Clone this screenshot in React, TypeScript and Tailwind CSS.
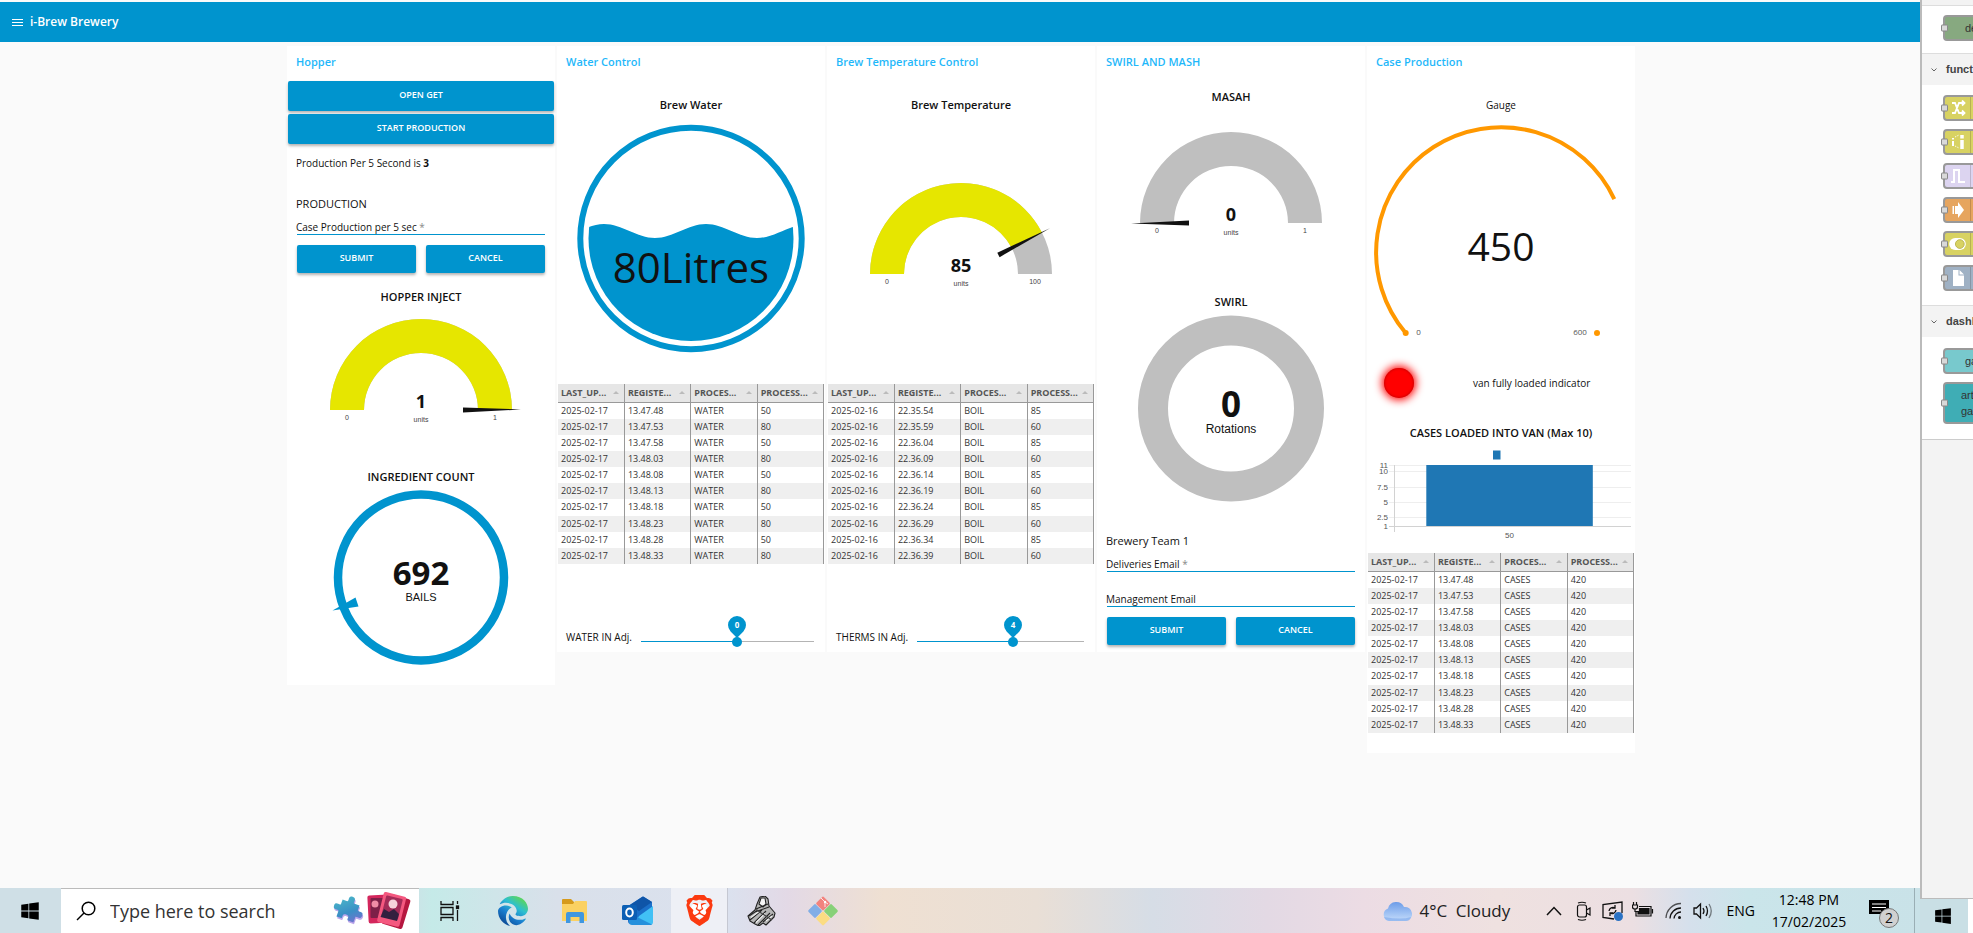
import { useState } from "react";
import type { ReactNode } from "react";
import { FaBrave, FaEdge, FaWindows } from "react-icons/fa6";

const SANS = "font-['Open_Sans','Noto_Sans',sans-serif]";

function polar(cx: number, cy: number, r: number, deg: number) {
  const a = (deg * Math.PI) / 180;
  return `${(cx + r * Math.cos(a)).toFixed(2)} ${(cy - r * Math.sin(a)).toFixed(2)}`;
}

function Card({ title, className = "", children }: { title: string; className?: string; children: ReactNode }) {
  return (
    <section className={`flex w-[268px] shrink-0 flex-col bg-white ${className}`}>
      <h2 className="mb-[3px] flex h-8 items-center px-[9px] text-[11px] font-semibold text-[#1fb8fa]">{title}</h2>
      {children}
    </section>
  );
}

function WideButton({ children }: { children: ReactNode }) {
  return (
    <button className="mx-px mb-[3px] h-[30px] rounded-xs bg-[#0094ce] pb-[2px] text-[9px] font-semibold text-white shadow-[0_2px_3px_rgba(0,0,0,0.3)]">
      {children}
    </button>
  );
}

function Field({ id, label, required }: { id: string; label: string; required?: boolean }) {
  return (
    <div className="relative mx-[10px] flex h-[15px]">
      <label htmlFor={id} className="pointer-events-none absolute top-0 -left-px text-[10px] leading-[14px]">
        {label}
        {required && <span className="text-[#888]"> *</span>}
      </label>
      <input id={id} className="w-full border-b border-[#0094ce] bg-transparent text-[10px] outline-none" />
    </div>
  );
}

function FormButtons() {
  return (
    <div className="mx-[10px] mt-[10px] grid grid-cols-2 gap-[10px]">
      {["SUBMIT", "CANCEL"].map((t) => (
        <button
          key={t}
          className="h-7 rounded-xs bg-[#0094ce] pb-[2px] text-[9px] font-semibold text-white shadow-[0_2px_3px_rgba(0,0,0,0.3)]"
        >
          {t}
        </button>
      ))}
    </div>
  );
}

function Gauge({ value, max, base, height }: { value: number; max: number; base: number; height: number }) {
  const cx = 134;
  const angle = 180 - (180 * value) / max;
  const arc = (from: number, to: number) =>
    `M${polar(cx, base, 91, from)} A91 91 0 0 1 ${polar(cx, base, 91, to)} L${polar(cx, base, 57, to)} A57 57 0 0 0 ${polar(cx, base, 57, from)} Z`;
  return (
    <svg viewBox={`0 0 268 ${height}`} className="w-full">
      <path d={arc(180, 0)} fill="#bfbfbf" />
      {value > 0 && <path d={arc(180, angle)} fill="#e6e600" />}
      <polygon
        fill="#111"
        points={`${cx + 42},${base - 2.5} ${cx + 100},${base - 0.5} ${cx + 42},${base + 2.5}`}
        transform={`rotate(${-angle} ${cx} ${base})`}
      />
      <g textAnchor="middle">
        <text x={cx} y={base - 2} fontSize="18" fontWeight="700" fill="#111">
          {value}
        </text>
        <g className="font-['Liberation_Sans',sans-serif]" fontSize="7" fill="#444">
          <text x={cx} y={base + 12}>units</text>
          <text x={cx - 74} y={base + 10}>0</text>
          <text x={cx + 74} y={base + 10}>{max}</text>
        </g>
      </g>
    </svg>
  );
}

function GaugeTitle({ className = "", children }: { className?: string; children: ReactNode }) {
  return <h3 className={`flex items-center justify-center text-[11px] font-semibold text-[#111] ${className}`}>{children}</h3>;
}

const COLUMNS = ["LAST_UP...", "REGISTE...", "PROCES...", "PROCESS..."];

function DataTable({ date, times, process, values }: { date: string; times: string[]; process: string; values: string[] }) {
  return (
    <table className="mx-px h-[180px] w-[266px] table-fixed border-collapse text-[9px] leading-[12px] text-[#333]">
      <thead>
        <tr className="h-[18px] border-b border-[#999] bg-[#e6e6e6] text-[#555]">
          {COLUMNS.map((c) => (
            <th key={c} className="border-r border-[#999] p-0 pr-[5px] pl-[3px] text-left font-bold">
              <div className="flex items-center justify-between">
                {c}
                <span className="border-x-3 border-b-3 border-x-transparent border-b-[#bbb]" />
              </div>
            </th>
          ))}
        </tr>
      </thead>
      <tbody>
        {times.map((t, i) => (
          <tr key={t} className="bg-white even:bg-[#efefef]">
            {[date, t, process, values[i % values.length]].map((v, j) => (
              <td key={j} className="border-r border-[#999] p-0 pl-[3px]">
                {v}
              </td>
            ))}
          </tr>
        ))}
      </tbody>
    </table>
  );
}

const WATER_TIMES = ["13.47.48", "13.47.53", "13.47.58", "13.48.03", "13.48.08", "13.48.13", "13.48.18", "13.48.23", "13.48.28", "13.48.33"];
const BOIL_TIMES = ["22.35.54", "22.35.59", "22.36.04", "22.36.09", "22.36.14", "22.36.19", "22.36.24", "22.36.29", "22.36.34", "22.36.39"];

function Slider({ id, label, min, max, initial }: { id: string; label: string; min: number; max: number; initial: number }) {
  const [value, setValue] = useState(initial);
  const ratio = (value - min) / (max - min);
  const pos = `calc(${ratio * 100}% + ${5 - ratio * 10}px)`;
  return (
    <div className="mt-11 flex h-11 items-start pr-[11px] pl-[9px]">
      <label htmlFor={id} className="mt-5 mr-[9px] text-[10px] leading-[18px] whitespace-nowrap">
        {label}
      </label>
      <div className="relative h-11 flex-1">
        <div className="absolute inset-x-0 top-[33px] h-px bg-[#b4b4b4]" />
        <div className="absolute top-[33px] left-0 h-px bg-[#0094ce]" style={{ width: pos }} />
        <div className="absolute top-2 -translate-x-1/2" style={{ left: pos }}>
          <svg width="18" height="22" viewBox="0 0 18 22">
            <path d="M9 22 L2.6 15.4 A9 9 0 1 1 15.4 15.4 Z" fill="#0094ce" />
            <text x="9" y="12" textAnchor="middle" fontSize="8" fontWeight="700" fill="#fff">
              {value}
            </text>
          </svg>
        </div>
        <input
          id={id}
          type="range"
          min={min}
          max={max}
          value={value}
          onChange={(e) => setValue(Number(e.target.value))}
          className="absolute inset-x-0 top-7 m-0 h-[11px] w-full appearance-none bg-transparent outline-none [&::-webkit-slider-thumb]:h-[10px] [&::-webkit-slider-thumb]:w-[10px] [&::-webkit-slider-thumb]:appearance-none [&::-webkit-slider-thumb]:rounded-full [&::-webkit-slider-thumb]:bg-[#0094ce]"
        />
      </div>
    </div>
  );
}

function HopperCard() {
  return (
    <Card title="Hopper" className="pb-4">
      <WideButton>OPEN GET</WideButton>
      <WideButton>START PRODUCTION</WideButton>
      <p className="flex h-8 items-center px-[9px] text-[10px]">
        Production Per 5 Second is&nbsp;<b>3</b>
      </p>
      <h3 className="mt-[9px] flex h-8 items-center px-[9px] text-[11px] font-medium text-[#111]">PRODUCTION</h3>
      <Field id="case-production" label="Case Production per 5 sec" required />
      <FormButtons />
      <GaugeTitle className="mt-2 h-8">HOPPER INJECT</GaugeTitle>
      <Gauge value={1} max={1} base={97} height={120} />
      <GaugeTitle className="mt-8 h-6">INGREDIENT COUNT</GaugeTitle>
      <svg viewBox="0 0 268 180" className="w-full">
        <circle cx="134" cy="88.5" r="83" fill="none" stroke="#0094ce" strokeWidth="8.5" />
        <polygon points="45.5,121.5 68.5,108.5 71.5,117.5" fill="#0094ce" />
        <text x="134" y="95.5" textAnchor="middle" fontSize="33" fontWeight="700" fill="#111">692</text>
        <text x="134" y="112" textAnchor="middle" fontSize="11" fill="#111" className="font-['Liberation_Sans',sans-serif]">BAILS</text>
      </svg>
    </Card>
  );
}

function WaterCard() {
  return (
    <Card title="Water Control">
      <GaugeTitle className="mt-2 h-8">Brew Water</GaugeTitle>
      <svg viewBox="0 0 268 235" className="mb-7 w-full">
        <defs>
          <clipPath id="tank">
            <circle cx="134" cy="117.5" r="102.5" />
          </clipPath>
        </defs>
        <circle cx="134" cy="117.5" r="110.7" fill="none" stroke="#0094ce" strokeWidth="6" />
        <path
          clipPath="url(#tank)"
          fill="#0094ce"
          d="M-4 117 C14 117 29 103 47 103 S80 117 98 117 S131 103 149 103 S182 117 200 117 S233 103 251 103 V235 H-4 Z"
        />
        <text x="134" y="162" textAnchor="middle" fontSize="42" fill="#111">80Litres</text>
      </svg>
      <DataTable date="2025-02-17" times={WATER_TIMES} process="WATER" values={["50", "80"]} />
      <Slider id="water-adj" label="WATER IN Adj." min={-10} max={8} initial={0} />
    </Card>
  );
}

function TemperatureCard() {
  return (
    <Card title="Brew Temperature Control">
      <GaugeTitle className="mt-2 h-8">Brew Temperature</GaugeTitle>
      <div className="mb-7">
        <Gauge value={85} max={100} base={153} height={235} />
      </div>
      <DataTable date="2025-02-16" times={BOIL_TIMES} process="BOIL" values={["85", "60"]} />
      <Slider id="therms-adj" label="THERMS IN Adj." min={-25} max={25} initial={4} />
    </Card>
  );
}

function SwirlCard() {
  return (
    <Card title="SWIRL AND MASH" className="pb-[7px]">
      <GaugeTitle className="h-8">MASAH</GaugeTitle>
      <Gauge value={0} max={1} base={110} height={145} />
      <GaugeTitle className="mt-8 h-6">SWIRL</GaugeTitle>
      <svg viewBox="0 0 268 190" className="w-full">
        <circle cx="134" cy="94.5" r="78" fill="none" stroke="#bfbfbf" strokeWidth="30" />
        <text x="134" y="103" textAnchor="middle" fontSize="35" fontWeight="700" fill="#111">0</text>
        <text x="134" y="119" textAnchor="middle" fontSize="12" fill="#111" className="font-['Liberation_Sans',sans-serif]">Rotations</text>
      </svg>
      <h3 className="mt-[21px] flex h-8 items-center px-[9px] text-[11px] font-medium text-[#111]">Brewery Team 1</h3>
      <Field id="deliveries" label="Deliveries Email" required />
      <div className="h-5" />
      <Field id="management" label="Management Email" />
      <FormButtons />
    </Card>
  );
}

const TICKS: [string, number][] = [["11", 16], ["10", 22], ["7.5", 38], ["5", 53], ["2.5", 68], ["1", 77]];

function CaseCard() {
  return (
    <Card title="Case Production" className="pb-5">
      <h3 className="mt-2 flex h-8 items-center justify-center text-[10px]">Gauge</h3>
      <svg viewBox="0 0 268 240" className="w-full">
        <path d={`M38.7 212 A125 125 0 1 1 ${polar(134, 131, 125, 25)}`} fill="none" stroke="#ff9800" strokeWidth="4" />
        <circle cx="38.7" cy="212" r="3" fill="#ff9800" />
        <circle cx="230" cy="212" r="3" fill="#ff9800" />
        <text x="134" y="140" textAnchor="middle" fontSize="39" fill="#111">450</text>
        <g textAnchor="middle" fontSize="8" fill="#555">
          <text x="51.5" y="214">0</text>
          <text x="213" y="214">600</text>
        </g>
      </svg>
      <div className="flex h-11 items-center pl-[17px]">
        <span className="h-[30px] w-[30px] rounded-full bg-[#ff0000] shadow-[0_0_8px_2px_#ff0000,inset_0_0_3px_rgba(120,0,0,0.6)]" />
        <span className="ml-[59px] text-[10px]">van fully loaded indicator</span>
      </div>
      <GaugeTitle className="mt-3 h-8">CASES LOADED INTO VAN (Max 10)</GaugeTitle>
      <svg viewBox="0 0 268 96" className="mb-2 w-full font-['Liberation_Sans',sans-serif]">
        <rect x="126" y="1.5" width="7.5" height="9" fill="#1f77b4" />
        <g stroke="#eeeeee">
          {TICKS.map(([label, y]) => (
            <line key={label} x1="22" x2="264" y1={y + 0.5} y2={y + 0.5} />
          ))}
        </g>
        <path d="M27.5 16 V83 M22 77.5 H264" stroke="#d2d2d2" fill="none" />
        <rect x="59.3" y="16" width="166.5" height="61" fill="#1f77b4" />
        <g fontSize="8" fill="#555" textAnchor="end">
          {TICKS.map(([label, y]) => (
            <text key={label} x="21" y={y + 3}>
              {label}
            </text>
          ))}
        </g>
        <text x="142.5" y="89" fontSize="8" fill="#555" textAnchor="middle">50</text>
      </svg>
      <DataTable date="2025-02-17" times={WATER_TIMES} process="CASES" values={["420"]} />
    </Card>
  );
}

/* Node palette */

function PaletteNode({ color, tall, icon, children }: { color: string; tall?: boolean; icon?: ReactNode; children?: ReactNode }) {
  return (
    <div className="relative ml-[21px]">
      <div
        className={`flex w-[110px] items-center overflow-hidden rounded-[4px] border-2 border-[#999] ${tall ? "h-[42px]" : "h-[26px]"} ${color}`}
      >
        {icon && <span className="flex h-full w-[26px] items-center justify-center border-r border-black/15 text-white">{icon}</span>}
        {children}
      </div>
      <span className="absolute top-1/2 -left-[2px] h-[7px] w-[7px] -translate-y-1/2 rounded-[1px] border border-[#888] bg-[#d9d9d9]" />
    </div>
  );
}

function PaletteHeader({ children }: { children: ReactNode }) {
  return (
    <h4 className="flex h-8 items-center gap-[9px] overflow-hidden border-t border-[#ddd] bg-[#f3f3f3] pl-[9px] text-[11px] font-bold whitespace-nowrap text-[#444]">
      <svg width="6" height="4" viewBox="0 0 6 4" className="shrink-0">
        <path d="M.5 .5 L3 3 L5.5 .5" fill="none" stroke="#666" />
      </svg>
      {children}
    </h4>
  );
}

function Palette() {
  const ico = "h-4 w-4 fill-none stroke-white";
  return (
    <aside className="flex w-[53px] shrink-0 flex-col overflow-hidden font-['Liberation_Sans',sans-serif] text-[11px] text-[#333]">
      <div className="flex flex-1 flex-col border-l-2 border-[#bbb] bg-[#f3f3f3]">
        <div className="h-[5px]" />
        <div className="h-12 border-t border-[#ddd] bg-white pt-[9px]">
          <PaletteNode color="bg-[#87a980]">
            <span className="ml-5">debug</span>
          </PaletteNode>
        </div>
        <PaletteHeader>function</PaletteHeader>
        <div className="flex h-[220px] flex-col gap-2 bg-white pt-[10px]">
          <PaletteNode
            color="bg-[#d8d262]"
            icon={
              <svg viewBox="0 0 16 16" className={ico} strokeWidth="1.8">
                <path d="M2 3 H5 L9 13 H13 M2 13 H5 L9 3 H13 M12 .5 L14.5 3 L12 5.5 M12 10.5 L14.5 13 L12 15.5" />
              </svg>
            }
          />
          <PaletteNode
            color="bg-[#d8d262]"
            icon={
              <svg viewBox="0 0 16 16" className={ico}>
                <path d="M3 7 V12 M3 4 V5.5" strokeWidth="2" />
                <path d="M12 6 V15 M12 1 V4.5" strokeWidth="3.5" />
                <path d="M5 3 L9 1 M5 12 L9 14" strokeDasharray="1 1" />
              </svg>
            }
          />
          <PaletteNode
            color="bg-[#dcd4f0]"
            icon={
              <svg viewBox="0 0 16 16" className={ico} strokeWidth="2">
                <path d="M1 14 H4 V2 H9 V14 H15" />
              </svg>
            }
          />
          <PaletteNode
            color="bg-[#e6a55f]"
            icon={
              <svg viewBox="0 0 16 16" className="h-4 w-4 fill-white">
                <path d="M5 4 H8 V0 L14 8 L8 16 V12 H5 Z M2.5 4 H4 V12 H2.5 Z" />
              </svg>
            }
          />
          <PaletteNode
            color="bg-[#d8d262]"
            icon={
              <svg viewBox="0 0 18 14" className="h-[13px] w-[17px]">
                <rect width="18" height="13" rx="6.5" fill="#fff" />
                <circle cx="11.5" cy="6.5" r="4.7" fill="#d8d262" stroke="#b8b24a" />
              </svg>
            }
          />
          <PaletteNode
            color="bg-[#9fb1c4]"
            icon={
              <svg viewBox="0 0 16 16" className="h-4 w-4 fill-white">
                <path d="M3 0 H8.5 V5.5 H14 V16 H3 Z M9.5 0 L14 4.500 H9.5 Z" />
              </svg>
            }
          />
        </div>
        <PaletteHeader>dashboard</PaletteHeader>
        <div className="flex h-[102px] flex-col gap-2 bg-white pt-[11px]">
          <PaletteNode color="bg-[#78c9cd]">
            <span className="ml-5">gauge</span>
          </PaletteNode>
          <PaletteNode color="bg-[#3fadb5]" tall>
            <span className="ml-4 leading-4">
              artless-
              <br />
              gauge
            </span>
          </PaletteNode>
        </div>
        <div className="border-t border-[#ccc]" />
      </div>
      <div className="flex h-[35px] border-t border-[#bbb] bg-white">
        <div className="flex w-12 items-center bg-[#c9dfe5] pl-[14px]">
          <FaWindows className="h-[18px] w-[18px] text-black" />
        </div>
      </div>
    </aside>
  );
}

/* Taskbar */

function PuzzleIcon() {
  return (
    <svg viewBox="0 0 32 32" className="h-8 w-8">
      <defs>
        <linearGradient id="puz" x1="0" y1="0" x2="1" y2="1">
          <stop offset="0" stopColor="#4fc3c9" />
          <stop offset=".6" stopColor="#3b8fc6" />
          <stop offset="1" stopColor="#7d6bd0" />
        </linearGradient>
      </defs>
      <g transform="rotate(20 16 16)">
        <path
          transform="translate(1.2 1.5)"
          fill="#bda6ea"
          d="M7 7 H12 C14 6 10.500 1 15.500 1 S18 6 19 7 H25 V12 C26 14 31 10.500 31 15.500 S26 18 25 19 V25 H19 C17 24 20.500 20 15.500 20 S14 24 12 25 H7 V19 C6 17 1 20.500 1 15.500 S6 14 7 12 Z"
        />
        <path
          fill="url(#puz)"
          d="M7 7 H12 C14 6 10.500 1 15.500 1 S18 6 19 7 H25 V12 C26 14 31 10.500 31 15.500 S26 18 25 19 V25 H19 C17 24 20.500 20 15.500 20 S14 24 12 25 H7 V19 C6 17 1 20.500 1 15.500 S6 14 7 12 Z"
        />
      </g>
    </svg>
  );
}

function PhotosIcon() {
  return (
    <svg viewBox="0 0 44 38" className="h-[38px] w-11">
      <rect x="1" y="3" width="22" height="28" rx="2" transform="rotate(-3 12 17)" fill="#d3265c" />
      <rect x="3.5" y="6" width="16" height="20" rx="1" fill="#7d2048" />
      <circle cx="8" cy="12" r="3.5" fill="#f08ca6" />
      <rect x="18" y="4" width="22" height="31" rx="2" transform="rotate(17 29 19)" fill="#b5173f" />
      <rect x="13" y="2" width="23" height="31" rx="2" transform="rotate(14 25 18)" fill="#f4587f" />
      <rect x="16" y="5" width="17" height="21" rx="1" transform="rotate(14 25 18)" fill="#a32c58" />
      <path d="M13.500 25 L17 17 L22 20 L27 17 L32 22 L30 29 Z" fill="#33203f" />
      <circle cx="26" cy="12" r="4.500" fill="#f6d3da" />
    </svg>
  );
}

function FolderIcon() {
  return (
    <svg viewBox="0 0 28 24" className="h-6 w-7">
      <path d="M1 1 Q1 0 2 0 H10 L13 3 V6 H1 Z" fill="#d69a1c" />
      <path d="M1 5 H12 L14 2 H25 Q26 2 26 3 V22 H1 Z" fill="#fbd162" />
      <path d="M5 24 V15 Q5 13 7 13 H21 Q23 13 23 15 V24 H18.500 V18 H9.500 V24 Z" fill="#3f97e0" />
    </svg>
  );
}

function OutlookIcon() {
  return (
    <svg viewBox="0 0 32 30" className="h-[30px] w-8">
      <path d="M6 10 L20 1 Q21 0 22 1 L30 6 V26 Q30 28 28 28 H9 Q6 28 6 25 Z" fill="#1a6fc9" />
      <path d="M8 9 L20 1 Q21 0 22 1 L30 6 L17 15 Z" fill="#0f55a8" />
      <path d="M17 20 L31 10 V26 Q31 29 28 29 H12 Z" fill="#41c0f5" />
      <path d="M7 17 L30 28.500 Q29 29 28 29 H10 Q7 29 7 26 Z" fill="#2590dc" />
      <rect x="0" y="9" width="15" height="15" rx="1.5" fill="#0c5fb5" />
      <ellipse cx="7.500" cy="16.500" rx="3.300" ry="3.900" fill="none" stroke="#fff" strokeWidth="2" />
    </svg>
  );
}

function TaskViewIcon() {
  return (
    <svg viewBox="0 0 20 20" className="h-5 w-5" fill="none" stroke="#111" strokeWidth="1.3">
      <path d="M1 0 V3.500 H13 V0 M1 20 V16.500 H13 V20 M1 6.500 H13 V13.500 H1 Z M17.500 0 V3 M17.500 9 V20" />
      <rect x="16.500" y="5" width="2" height="2.500" fill="#111" />
    </svg>
  );
}

function PillagerIcon() {
  return (
    <svg viewBox="0 0 32 30" className="h-[30px] w-8" stroke="#222" strokeWidth="1.1" strokeLinejoin="round">
      <path d="M11 8 L14 1 L19 0 L22 3 L23 10 L29 17 L28 21 L20 29 L17 27 L13 30 L9 28 L4 25 L2 20 L9 14 Z" fill="#b5b5b5" />
      <path d="M13 8 L15 2 L19 2 L20 8 L17 11 Z" fill="#f5f5f5" />
      <path d="M10 13 L22 8 M9 16 L23 11 M3 20 L12 14 M4 24 L16 14 M8 27 L20 15 M12 29 L24 17 M17 26 L27 18" fill="none" />
      <path d="M5 21.500 L13 15.500 M10 26.500 L19 17.500 M20 25 L26 20" stroke="#f2f2f2" />
      <path d="M9 13 L26 24" stroke="#444" fill="none" />
    </svg>
  );
}

function GitIcon() {
  return (
    <svg viewBox="0 0 32 32" className="h-8 w-8">
      <rect x="10.750" y="3.250" width="10.500" height="10.500" rx="1.5" transform="rotate(45 16 8.500)" fill="#f2837e" />
      <rect x="2.750" y="10.750" width="10.500" height="10.500" rx="1.5" transform="rotate(45 8 16)" fill="#82aee6" />
      <rect x="18.750" y="10.750" width="10.500" height="10.500" rx="1.5" transform="rotate(45 24 16)" fill="#87d178" />
      <rect x="10.750" y="18.250" width="10.500" height="10.500" rx="1.5" transform="rotate(45 16 23.500)" fill="#fbdc83" />
      <path d="M14 3 L18 7 V12 M18 7 L21 9" stroke="#fff" strokeWidth="1" fill="none" opacity=".8" />
      <circle cx="18" cy="7" r="1.2" fill="#fff" />
    </svg>
  );
}

function CloudIcon() {
  return (
    <svg viewBox="0 0 30 22" className="h-[22px] w-[30px]">
      <defs>
        <linearGradient id="cloud" x1="0" y1="0" x2="0" y2="1">
          <stop offset="0" stopColor="#6c9ce8" />
          <stop offset="1" stopColor="#c4dcfb" />
        </linearGradient>
      </defs>
      <path d="M7 21 A6.500 6.500 0 0 1 6 8.500 A8.500 8.500 0 0 1 22 7 A7 7 0 0 1 24 21 Z" fill="url(#cloud)" />
      <path d="M7 21 H24 A5 5 0 0 0 29 17 Q20 20 2 17 A6 6 0 0 0 7 21 Z" fill="#7ba6ea" opacity=".6" />
    </svg>
  );
}

function TrayIcons() {
  const c = "shrink-0 fill-none stroke-[#111]";
  return (
    <>
      <svg viewBox="0 0 16 10" className={`h-[10px] w-4 ${c}`} strokeWidth="1.5">
        <path d="M1 9 L8 1.500 L15 9" />
      </svg>
      <svg viewBox="0 0 16 20" className={`ml-[14px] h-5 w-4 ${c}`} strokeWidth="1.2">
        <rect x="1.500" y="4" width="9" height="12" rx="2" />
        <path d="M10.500 9 L14 7 V14 L10.500 12 M2 2 Q6 .5 10 2 M2 18.500 Q6 20 10 18.500" />
      </svg>
      <svg viewBox="0 0 22 20" className={`ml-[10px] h-5 w-[22px] ${c}`} strokeWidth="1.3">
        <path d="M12 18 L1 16.500 V3.500 L20 1 V12 M7 10 A4 4 0 0 1 13 7 M14 9 A4 4 0 0 1 8 12 M13 4 V7 H10 M8 15 V12 H11" />
        <circle cx="16.500" cy="15.500" r="4.500" fill="#2b72c4" stroke="none" />
      </svg>
      <svg viewBox="0 0 22 16" className={`mb-[2px] ml-2 h-4 w-[22px] ${c}`} strokeWidth="1.2">
        <path d="M7 4.500 H19 V14 H4 V9 M1.500 0 V3 M4.500 0 V3 M.5 3 H5.500 V5 Q5.500 7 3 7 Q.5 7 .5 5 Z M3 7 V9.500 H6 M20.500 7 V11.500" />
        <path d="M7.500 6.500 H17 V12 H6 V9.500 H7.500 Z" fill="#111" />
      </svg>
      <svg viewBox="0 0 18 18" className={`ml-[11px] h-[18px] w-[18px] ${c}`} strokeWidth="1.3">
        <path d="M1 16 A15 15 0 0 1 16 1.500" opacity=".7" />
        <path d="M5 16.500 A11 11 0 0 1 16 6 M9 16.500 A7 7 0 0 1 16 10" />
        <circle cx="14.500" cy="15.500" r="1.5" fill="#111" stroke="none" />
      </svg>
      <svg viewBox="0 0 20 18" className={`ml-[10px] h-[18px] w-5 ${c}`} strokeWidth="1.3">
        <path d="M1 6 H3.500 L7.500 2 V16 L3.500 12 H1 Z M10 6 Q12 9 10 12 M13 4 Q16 9 13 14" />
        <path d="M16 2 Q20.500 9 16 16" opacity=".5" />
      </svg>
    </>
  );
}

function Taskbar() {
  return (
    <footer className="flex h-[45px] shrink-0 items-stretch bg-[linear-gradient(90deg,#cfdfe6_0,#cfdfe6_21%,#c5eae8_22.5%,#d9e0ea_29%,#dbe1ee_38%,#e3d9e6_41%,#efe0d2_46%,#e9dfd6_54%,#d6dde6_60%,#e3d9e4_66%,#ecdce4_71%,#efe1e0_78%,#ecdfe2_85%,#d5e0ec_88%,#cae5ea_91%,#c9e2e8_100%)] text-black">
      <button aria-label="Start" className="flex w-[61px] items-center pl-5">
        <FaWindows className="h-5 w-5" />
      </button>
      <div className="flex w-[358px] items-center border-t border-[#bbb] bg-white pl-[15px]">
        <svg viewBox="0 0 20 20" className="h-5 w-5 shrink-0 fill-none stroke-black" strokeWidth="1.5">
          <circle cx="12.500" cy="7.500" r="6.300" />
          <path d="M8 12 L1 19" />
        </svg>
        <input
          aria-label="Search"
          placeholder="Type here to search"
          className="mx-[14px] min-w-0 flex-1 bg-transparent text-[18px] outline-none placeholder:text-[#333]"
        />
        <PuzzleIcon />
        <span className="mr-2 ml-[3px]">
          <PhotosIcon />
        </span>
      </div>
      <div className="flex items-center">
        <span className="ml-[21px]"><TaskViewIcon /></span>
        <svg className="absolute h-0 w-0">
          <defs>
            <linearGradient id="edge" x1="0.9" y1="0.1" x2="0.3" y2="1">
              <stop offset="0" stopColor="#5fd84f" />
              <stop offset=".35" stopColor="#2dbfd0" />
              <stop offset=".65" stopColor="#1a7fd0" />
              <stop offset="1" stopColor="#0c4a95" />
            </linearGradient>
          </defs>
        </svg>
        <FaEdge className="ml-[38px] h-[30px] w-[30px] fill-[url(#edge)]" />
        <span className="ml-[33px]"><FolderIcon /></span>
        <span className="ml-[33px]"><OutlookIcon /></span>
      </div>
      <div className="ml-[17px] flex w-14 items-center justify-center bg-[#eef0f6]">
        <svg viewBox="0 0 26 30" className="absolute h-6 w-4">
          <rect x="0" y="3" width="26" height="22" rx="8" fill="#fff" />
        </svg>
        <FaBrave className="relative h-[31px] w-[31px] text-[#fb3a10]" />
      </div>
      <div className="flex flex-1 items-center border-l border-[#c5c8d2] pl-[18px]">
        <PillagerIcon />
        <span className="ml-[29px]"><GitIcon /></span>
      </div>
      <div className="flex items-center whitespace-nowrap">
        <CloudIcon />
        <span className="ml-2 w-[126px] text-[17px] text-[#222]">4°C&ensp;Cloudy</span>
        <TrayIcons />
        <span className="ml-[14px] text-[14px]">ENG</span>
        <div className="ml-3 flex w-[84px] flex-col items-center text-[14px] leading-[22px]">
          <span>12:48 PM</span>
          <span>17/02/2025</span>
        </div>
        <svg viewBox="0 0 32 34" className="ml-[18px] h-[34px] w-8">
          <path d="M0 6 H20 V20 H15 V24 L11 20 H0 Z" fill="#000" />
          <path d="M3 10 H17 M3 13.500 H17 M3 17 H12" stroke="#fff" strokeWidth="1.2" />
          <circle cx="20" cy="24" r="9.500" fill="#d0d0d0" stroke="#777" />
          <text x="20" y="29" textAnchor="middle" fontSize="14" fill="#111">2</text>
        </svg>
        <div className="ml-[13px] h-full w-[6px] border-l border-[#9aafb5]" />
      </div>
    </footer>
  );
}

export default function App() {
  return (
    <div className={`flex h-screen overflow-hidden bg-[#fafafa] text-[#111] ${SANS}`}>
      <div className="flex min-w-0 flex-1 flex-col">
        <header className="mt-[2px] flex h-10 shrink-0 items-center gap-[7px] bg-[#0094ce] pl-[12px] text-white">
          <button aria-label="Menu" className="flex w-[11px] flex-col gap-[2px]">
            <span className="h-px bg-white" />
            <span className="h-px bg-white" />
            <span className="h-px bg-white" />
          </button>
          <h1 className="text-[12px] font-semibold">i-Brew Brewery</h1>
        </header>
        <main className="flex flex-1 items-start justify-center gap-[2px] overflow-hidden pt-1 pl-[2px]">
          <HopperCard />
          <WaterCard />
          <TemperatureCard />
          <SwirlCard />
          <CaseCard />
        </main>
        <Taskbar />
      </div>
      <Palette />
    </div>
  );
}
